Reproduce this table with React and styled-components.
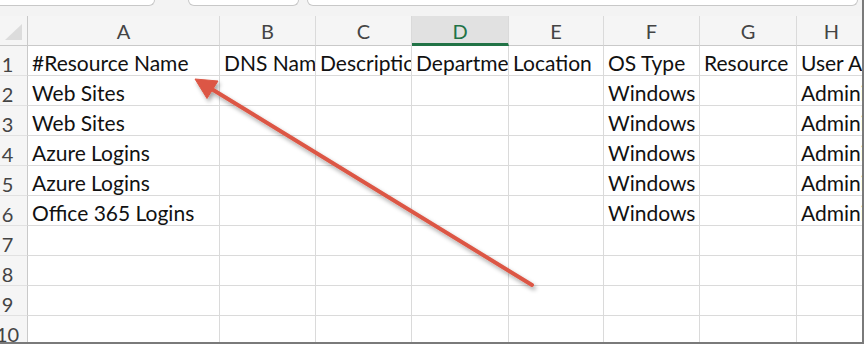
import styled, { createGlobalStyle } from "styled-components";

const GlobalStyle = createGlobalStyle`
  html, body {
    margin: 0;
    padding: 0;
    background: #ffffff;
  }
  body {
    font-family: Lato, "Liberation Sans", sans-serif;
  }
`;

const columns = [
  { letter: "A", width: 192 },
  { letter: "B", width: 96 },
  { letter: "C", width: 96 },
  { letter: "D", width: 97, selected: true },
  { letter: "E", width: 95 },
  { letter: "F", width: 96 },
  { letter: "G", width: 97 },
  { letter: "H", width: 70 },
];

const header = [
  "#Resource Name",
  "DNS Name",
  "Description",
  "Department",
  "Location",
  "OS Type",
  "Resource",
  "User Account",
];

const logins = [
  "Web Sites",
  "Web Sites",
  "Azure Logins",
  "Azure Logins",
  "Office 365 Logins",
];

const rows = [
  header,
  ...logins.map((name) => [name, "", "", "", "", "Windows", "", "Administrator"]),
  [], [], [], [],
];

const App = () => {
  return (
    <>
      <GlobalStyle />
      <Frame>
        <TopBar>
          <FieldBox width={158} offset={-5} />
          <FieldBox width={109} offset={33} />
          <FieldBox width={549} offset={8} />
        </TopBar>

        <Sheet cols={columns.map((c) => `${c.width}px`).join(" ")}>
          <Corner>
            <CornerMark />
          </Corner>
          {columns.map((c) => (
            <ColHead key={c.letter} selected={c.selected}>
              {c.letter}
            </ColHead>
          ))}

          {rows.map((row, r) => (
            <Row key={r}>
              <RowHead>{r + 1}</RowHead>
              {columns.map((c, i) => (
                <Cell key={c.letter}>{row[i] || ""}</Cell>
              ))}
            </Row>
          ))}
        </Sheet>

        <Arrow viewBox="0 0 866 344">
          <defs>
            <filter id="shadow" x="-10%" y="-10%" width="120%" height="120%">
              <feDropShadow dx="2" dy="3" stdDeviation="2" floodColor="#000" floodOpacity="0.35" />
            </filter>
          </defs>
          <g filter="url(#shadow)" fill="#dc5745" stroke="#dc5745">
            <line x1="532" y1="285" x2="210" y2="88" strokeWidth="4" strokeLinecap="round" />
            <polygon points="195,79 218,81 207,98.5" strokeWidth="1" strokeLinejoin="round" />
          </g>
        </Arrow>
      </Frame>
    </>
  );
};

export default App;

const Frame = styled.div`
  position: relative;
  width: 862px;
  height: 342px;
  overflow: hidden;
  background: #f3f3f3;
  border-right: 2px solid #7a7a7a;
  border-bottom: 2px solid #7a7a7a;
`;

const TopBar = styled.div`
  display: flex;
  align-items: flex-start;
  height: 16px;
`;

const FieldBox = styled.div`
  flex: none;
  width: ${(p) => p.width}px;
  margin-left: ${(p) => p.offset}px;
  height: 5px;
  background: #ffffff;
  border: 1px solid #c8c8c8;
  border-top: none;
  border-radius: 0 0 6px 6px;
`;

const Sheet = styled.div`
  display: grid;
  grid-template-columns: 28px ${(p) => p.cols};
  grid-auto-rows: 30px;
`;

const Row = styled.div`
  display: contents;
`;

const Corner = styled.div`
  position: relative;
  background: #f5f5f5;
  border-right: 1px solid #c9c9c9;
  border-bottom: 1px solid #c9c9c9;
`;

const CornerMark = styled.div`
  position: absolute;
  left: 5px;
  top: 8px;
  width: 17px;
  height: 16px;
  background: #dcdcdc;
  clip-path: polygon(100% 0, 100% 100%, 0 100%);
`;

const ColHead = styled.div`
  display: flex;
  align-items: center;
  justify-content: center;
  font-size: 20px;
  color: ${(p) => (p.selected ? "#217346" : "#444444")};
  background: ${(p) => (p.selected ? "#e1e1e1" : "#f5f5f5")};
  border-right: 1px solid #dadada;
  border-bottom: ${(p) => (p.selected ? "3px solid #217346" : "1px solid #c9c9c9")};
  padding-top: ${(p) => (p.selected ? "2px" : "0")};
`;

const RowHead = styled.div`
  display: flex;
  align-items: flex-end;
  justify-content: center;
  padding: 0 12px 1px 0;
  font-size: 20px;
  line-height: 1;
  color: #444444;
  background: #f5f5f5;
  border-right: 1px solid #c9c9c9;
  border-bottom: 1px solid #e1e1e1;
`;

const Cell = styled.div`
  display: flex;
  align-items: flex-end;
  padding: 0 4px 2px;
  font-size: 21px;
  line-height: 1;
  color: #111111;
  background: #ffffff;
  white-space: nowrap;
  overflow: hidden;
  border-right: 1px solid #dadada;
  border-bottom: 1px solid #dadada;
`;

const Arrow = styled.svg`
  position: absolute;
  left: 0;
  top: 0;
  width: 866px;
  height: 344px;
  pointer-events: none;
`;
